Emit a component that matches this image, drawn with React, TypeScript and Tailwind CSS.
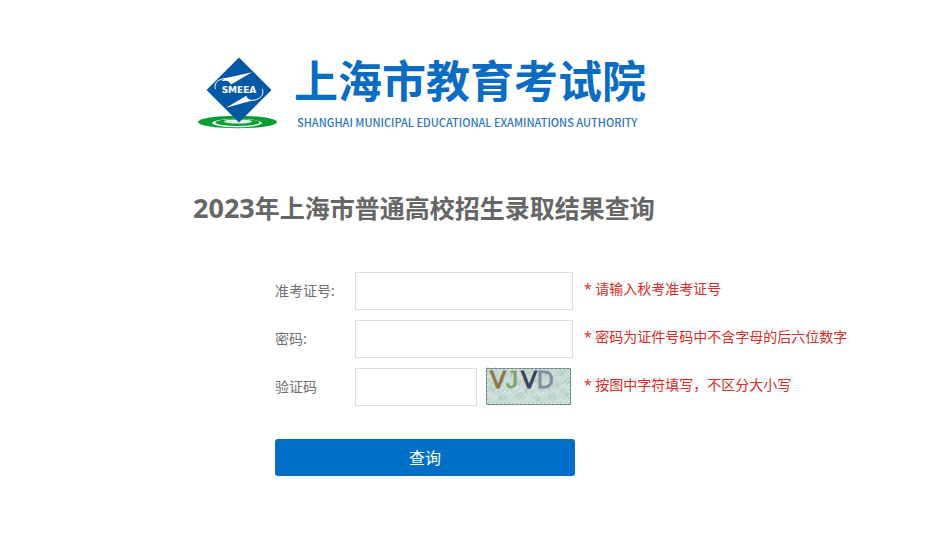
import type { ReactNode } from "react";

function Logo() {
  return (
    <svg viewBox="0 0 81 74" className="h-[74px] w-[81px] shrink-0" role="img" aria-label="SMEEA">
      <ellipse cx="40.500" cy="66" rx="39.500" ry="6.300" fill="#0a9f35" />
      <ellipse cx="40" cy="67" rx="25" ry="4.200" fill="#fff" />
      <ellipse cx="40.500" cy="66.500" rx="22" ry="3.600" fill="#0a9f35" />
      <ellipse cx="41" cy="65.500" rx="14" ry="2" fill="#e3f6e8" />
      <path d="M42 1.500 74.500 34 42 66.500 9.500 34Z" fill="#0459a6" />
      <path d="M55 16.300 29 22 24 25 28 24.500C31 24.500 33 26 34 28.500Z" fill="#fff" />
      <path d="M29 22.300C20 23 16.500 28 18.500 33M26 24.500C30 23.500 33 25 34 28" fill="none" stroke="#fff" strokeWidth="1" />
      <path d="M29 51.700 49 40C49.500 42.500 51 44 54 44.300L59 43.500Z" fill="#fff" />
      <path d="M49 40C50 43.500 54 45 58 44C65 42 67.500 37 65 33" fill="none" stroke="#fff" strokeWidth="1" />
      <text
        x="42"
        y="37"
        textAnchor="middle"
        fontSize="9"
        fontWeight="700"
        fill="#fff"
        fontFamily="DejaVu Sans, Liberation Sans, sans-serif"
      >
        SMEEA
      </text>
    </svg>
  );
}

const scratches = Array.from({ length: 150 }, (_, i) => {
  const slope = [-4, 3, -3, 5, -5][(i * 7) % 5];
  return {
    x: (i * 37) % 83,
    y: 3 + ((i * 23 + (i % 7) * 3) % 31),
    dx: 2 + (i % 3),
    dy: slope,
    color: ["#a3c2bb", "#e6f3ef", "#b5c6a6", "#dcebe6", "#a9c4c6"][i % 5],
  };
});

function Captcha() {
  return (
    <svg
      viewBox="0 0 85 37"
      className="mr-[2px] h-[37px] w-[85px] shrink-0 self-start overflow-visible"
      role="img"
      aria-label="验证码图片"
      fontFamily="Liberation Sans, Arial, sans-serif"
      fontSize="25"
    >
      <rect width="85" height="37" fill="#c8dcd7" />
      {scratches.map((s, i) => (
        <path key={i} d={`M${s.x} ${s.y}l${s.dx} ${s.dy}`} stroke={s.color} strokeWidth="0.800" />
      ))}
      <text x="4" y="20" fontSize="24" fill="#8c7540" stroke="#8c7540" strokeWidth="1">V</text>
      <text x="20" y="20" fontSize="24" fill="#7d9e68" stroke="#7d9e68" strokeWidth="0.500">J</text>
      <text x="35" y="20" fontSize="24" fill="#3f3d58" stroke="#3f3d58" strokeWidth="1">V</text>
      <text x="51" y="20" fontSize="23" fill="#85899a" stroke="#85899a" strokeWidth="0.800">D</text>
      <rect x="0.500" y="0.500" width="84" height="36" fill="none" stroke="#64777a" strokeDasharray="3 1" />
    </svg>
  );
}

type FieldProps = { id: string; label: string; hint: string; type?: string; children?: ReactNode };

function Field({ id, label, hint, type = "text", children }: FieldProps) {
  return (
    <div className="flex items-center">
      <label htmlFor={id} className="w-20 shrink-0 text-sm text-[#707070]">
        {label}
      </label>
      <div className="flex w-[218px] shrink-0 items-center gap-[9px]">
        <input
          id={id}
          name={id}
          type={type}
          aria-describedby={`${id}-hint`}
          className="h-[38px] w-full min-w-0 flex-1 border border-[#dcdcdc] bg-white px-2 text-sm outline-none"
        />
        {children}
      </div>
      <p id={`${id}-hint`} className="ml-[11px] pb-1 text-sm whitespace-nowrap text-[#d92b27]">
        * {hint}
      </p>
    </div>
  );
}

export default function App() {
  return (
    <main className="min-h-screen bg-white pt-14 pb-10 pl-[193px] font-['Noto_Sans','Noto_Sans_CJK_SC',sans-serif]">
      <header className="flex items-start gap-4 pl-1">
        <Logo />
        <div className="whitespace-nowrap text-[#0b6cc4]">
          <p className="font-['Noto_Sans_CJK_SC',sans-serif] text-[44px] leading-[46px] font-bold">上海市教育考试院</p>
          <p className="pt-1 pl-[3px] font-['Noto_Sans_CJK_SC',sans-serif] text-[11px] leading-8 font-medium text-[#2f74b8]">
            SHANGHAI MUNICIPAL EDUCATIONAL EXAMINATIONS AUTHORITY
          </p>
        </div>
      </header>
      <h1 className="mt-[52px] text-[25px] leading-9 font-bold whitespace-nowrap text-[#666]">
        <span className="text-[27px]">2023</span>年上海市普通高校招生录取结果查询
      </h1>
      <form className="mt-[46px] flex flex-col gap-[10px] pl-[82px]" onSubmit={(e) => e.preventDefault()}>
        <Field id="ticket" label="准考证号:" hint="请输入秋考准考证号" />
        <Field id="password" label="密码:" hint="密码为证件号码中不含字母的后六位数字" type="password" />
        <Field id="captcha" label="验证码" hint="按图中字符填写，不区分大小写">
          <Captcha />
        </Field>
        <button type="submit" className="mt-[23px] h-[37px] w-[300px] rounded-[3px] bg-[#006fc8] text-base text-white">
          查询
        </button>
      </form>
    </main>
  );
}
